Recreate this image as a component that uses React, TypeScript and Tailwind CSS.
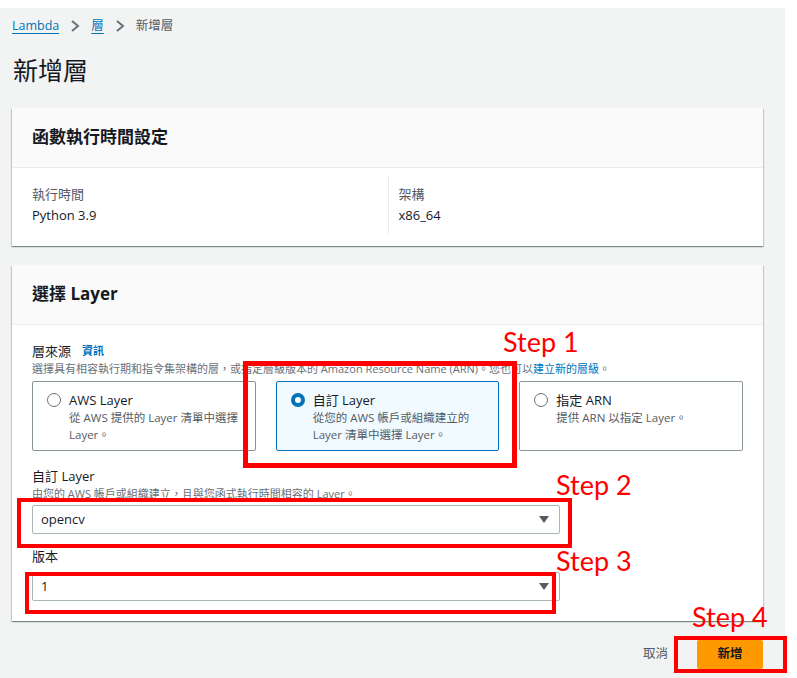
import React from "react";

const font = { fontFamily: '"Open Sans", "Noto Sans CJK TC", sans-serif' };

function Chevron() {
  return (
    <svg width="10" height="12" viewBox="0 0 10 12" className="mx-[11px]">
      <polyline points="2,1 8,6 2,11" fill="none" stroke="#687078" strokeWidth="2" />
    </svg>
  );
}

function Caret() {
  return (
    <svg width="10" height="7" viewBox="0 0 10 7">
      <polygon points="0,0 10,0 5,7" fill="#545b64" />
    </svg>
  );
}

function Radio({ checked }: { checked?: boolean }) {
  return checked ? (
    <span className="mt-[2px] box-border block h-[14px] w-[14px] shrink-0 rounded-full border-[4px] border-[#0073bb] bg-white" />
  ) : (
    <span className="mt-[2px] box-border block h-[14px] w-[14px] shrink-0 rounded-full border-[1.5px] border-[#687078] bg-white" />
  );
}

function Tile({
  title,
  lines,
  checked,
}: {
  title: string;
  lines: string[];
  checked?: boolean;
}) {
  return (
    <div
      className={
        "box-border flex h-[70px] gap-[8px] rounded-[2px] border pl-[14px] pt-[9px] " +
        (checked ? "border-[#0073bb] bg-[#f1faff]" : "border-[#879596] bg-white")
      }
    >
      <Radio checked={checked} />
      <div>
        <div className="text-[13px] leading-[18px] text-[#16191f]">{title}</div>
        {lines.map((l, i) => (
          <div key={i} className="text-[11.5px] leading-[17px] text-[#545b64]">
            {l}
          </div>
        ))}
      </div>
    </div>
  );
}

function Card({ title, children }: { title: string; children: React.ReactNode }) {
  return (
    <div className="w-[751px] bg-white shadow-[0_1px_1px_0_rgba(0,28,36,0.3),1px_1px_1px_0_rgba(0,28,36,0.15),-1px_1px_1px_0_rgba(0,28,36,0.15)]">
      <div className="flex h-[60px] items-center border-b border-[#eaeded] bg-[#fafafa] px-[20px]">
        <span className="-translate-y-[1px] text-[17px] font-bold text-[#16191f]">{title}</span>
      </div>
      {children}
    </div>
  );
}

function Select({ value }: { value: string }) {
  return (
    <div className="box-border flex h-[29px] w-[528px] items-center justify-between rounded-[2px] border border-[#aab7b8] bg-white pl-[8px] pr-[10px]">
      <span className="text-[13px] text-[#16191f]">{value}</span>
      <Caret />
    </div>
  );
}

const stepFont = { fontFamily: 'Lato, "Open Sans", sans-serif' };

export default function App() {
  return (
    <div className="relative h-[678px] w-[797px] overflow-hidden bg-white" style={font}>
      <div className="mt-[8px] h-[670px] w-[785px] bg-[#f2f3f3] px-[12px]">
        {/* breadcrumb */}
        <div className="flex h-[16px] translate-y-[10px] items-center text-[12.5px]">
          <span className="text-[#0073bb] underline decoration-[#0073bb] underline-offset-[3px]">Lambda</span>
          <Chevron />
          <span className="text-[#0073bb] underline decoration-[#0073bb] underline-offset-[3px]">層</span>
          <Chevron />
          <span className="text-[#545b64]">新增層</span>
        </div>
        <div className="mt-[30px] h-[32px] pl-[1px] text-[25px] leading-[32px] text-[#16191f]">新增層</div>

        <div className="mt-[22px]">
          <Card title="函數執行時間設定">
            <div className="grid grid-cols-2 px-[20px] pb-[11px] pt-[7px]">
              <div className="pt-[9px] pb-[9px]">
                <div className="text-[13px] leading-[20px] text-[#545b64]">執行時間</div>
                <div className="text-[13px] leading-[22px] text-[#16191f]">Python 3.9</div>
              </div>
              <div className="border-l border-[#eaeded] pl-[10px] pt-[9px] pb-[9px]">
                <div className="text-[13px] leading-[20px] text-[#545b64]">架構</div>
                <div className="text-[13px] leading-[22px] text-[#16191f]">x86_64</div>
              </div>
            </div>
          </Card>
        </div>

        <div className="mt-[19px]">
          <Card title="選擇 Layer">
            <div className="px-[20px] pb-[20px] pt-[16px]">
              <div className="flex items-center gap-[11px] leading-[20px]">
                <span className="text-[13px] text-[#16191f]">層來源</span>
                <span className="text-[11px] font-bold text-[#0073bb]">資訊</span>
              </div>
              <div className="text-[11px] leading-[16px] text-[#687078]">
                選擇具有相容執行期和指令集架構的層，或指定層級版本的 Amazon Resource Name (ARN)。您也可以
                <span className="text-[#0073bb]">建立新的層級</span>。
              </div>
              <div className="mt-[4px] grid grid-cols-3 gap-[20px]">
                <Tile title="AWS Layer" lines={["從 AWS 提供的 Layer 清單中選擇", "Layer。"]} />
                <Tile checked title="自訂 Layer" lines={["從您的 AWS 帳戶或組織建立的", "Layer 清單中選擇 Layer。"]} />
                <Tile title="指定 ARN" lines={["提供 ARN 以指定 Layer。"]} />
              </div>
              <div className="mt-[16px] text-[13px] leading-[19px] text-[#16191f]">自訂 Layer</div>
              <div className="text-[11px] leading-[16px] text-[#687078]">
                由您的 AWS 帳戶或組織建立，且與您函式執行時間相容的 Layer。
              </div>
              <div className="mt-[3px]">
                <Select value="opencv" />
              </div>
              <div className="mt-[12px] text-[13px] leading-[20px] text-[#16191f]">版本</div>
              <div className="mt-[6px]">
                <Select value="1" />
              </div>
            </div>
          </Card>
        </div>

        <div className="mt-[19px] flex w-[751px] items-center justify-end">
          <span className="mr-[29px] text-[12.5px] text-[#545b64]">取消</span>
          <div className="flex h-[29px] w-[66px] items-center justify-center rounded-[2px] bg-[#ff9900] text-[12.5px] font-bold text-[#16191f]">
            新增
          </div>
        </div>
      </div>

      {/* red annotations */}
      <div className="absolute left-[243px] top-[361px] h-[107px] w-[274px] border-[5px] border-[#ff0000]" />
      <div className="absolute left-[17px] top-[498px] h-[50px] w-[555px] border-[4px] border-[#ff0000]" />
      <div className="absolute left-[25px] top-[572px] h-[42px] w-[531px] border-[4px] border-[#ff0000]" />
      <div className="absolute left-[674px] top-[636px] h-[37px] w-[113px] border-[4px] border-[#ff0000]" />

      <div className="absolute left-[503px] top-[325px] text-[27px] leading-[34px] text-[#ff0000]" style={stepFont}>Step 1</div>
      <div className="absolute left-[556px] top-[468px] text-[27px] leading-[34px] text-[#ff0000]" style={stepFont}>Step 2</div>
      <div className="absolute left-[556px] top-[544px] text-[27px] leading-[34px] text-[#ff0000]" style={stepFont}>Step 3</div>
      <div className="absolute left-[692px] top-[600px] text-[27px] leading-[34px] text-[#ff0000]" style={stepFont}>Step 4</div>
    </div>
  );
}
